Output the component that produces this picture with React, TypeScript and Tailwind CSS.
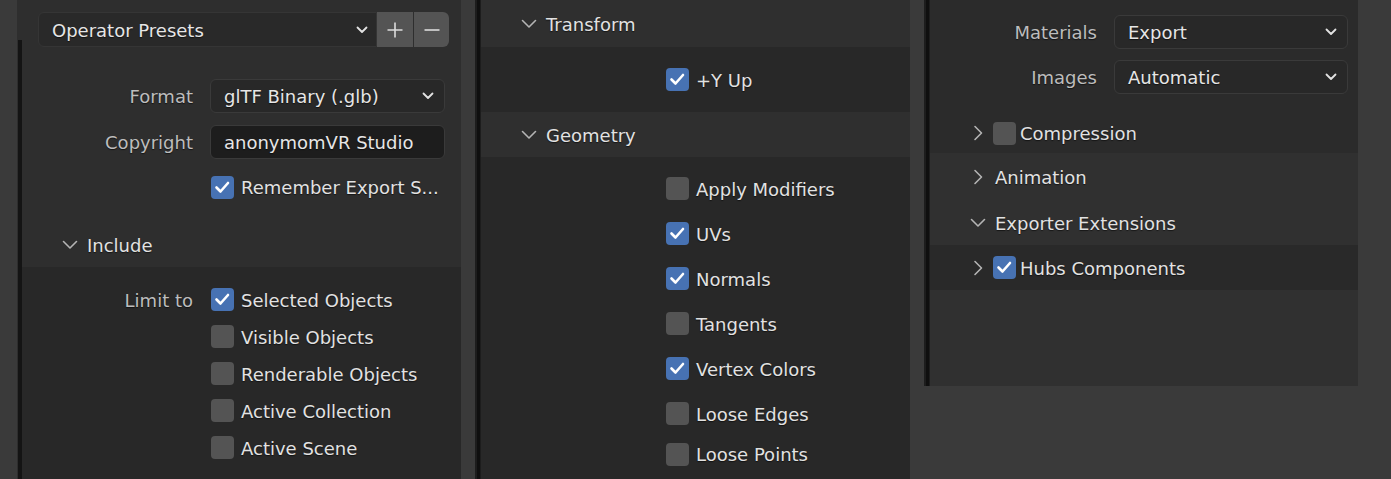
import React from "react";

const shadow = "[text-shadow:0_1px_1px_rgba(0,0,0,0.55)]";

function Check({ on }: { on: boolean }) {
  return (
    <span
      className={`flex h-[23px] w-[23px] shrink-0 items-center justify-center rounded-[4px] ${
        on ? "bg-[#4772b3]" : "bg-[#545454]"
      }`}
    >
      {on && (
        <svg width="23" height="23" viewBox="0 0 23 23" fill="none">
          <path d="M5.5 11.5 L9.5 15.5 L17 7" stroke="#ffffff" strokeWidth="2.6" strokeLinecap="round" strokeLinejoin="round" />
        </svg>
      )}
    </span>
  );
}

function Disclosure({ open }: { open: boolean }) {
  return (
    <span className="flex w-[16px] shrink-0 items-center justify-center">
      {open ? (
        <svg width="16" height="10" viewBox="0 0 16 10" fill="none">
          <path d="M1.5 1.5 L8 8 L14.5 1.5" stroke="#b4b4b4" strokeWidth="1.6" strokeLinecap="round" strokeLinejoin="round" />
        </svg>
      ) : (
        <svg width="10" height="16" viewBox="0 0 10 16" fill="none">
          <path d="M2 1.5 L8.5 8 L2 14.5" stroke="#b4b4b4" strokeWidth="1.6" strokeLinecap="round" strokeLinejoin="round" />
        </svg>
      )}
    </span>
  );
}

function Caret() {
  return (
    <svg width="12" height="8" viewBox="0 0 12 8" fill="none">
      <path d="M1.5 1.5 L6 6 L10.5 1.5" stroke="#e2e2e2" strokeWidth="1.8" strokeLinecap="round" strokeLinejoin="round" />
    </svg>
  );
}

function Select({ value, w }: { value: string; w: string }) {
  return (
    <div className={`flex h-[34px] ${w} items-center justify-between rounded-[6px] border border-[#3a3a3a] bg-[#282828] pl-[13px] pr-[10px] text-[#e6e6e6] ${shadow}`}>
      <span className="pt-[2px]">{value}</span>
      <Caret />
    </div>
  );
}

function Field({ label, labelW, children }: { label: string; labelW: string; children: React.ReactNode }) {
  return (
    <div className="flex h-[34px] items-center">
      <span className={`${labelW} pr-[17px] pt-[2px] text-right text-[#bdbdbd] ${shadow}`}>{label}</span>
      {children}
    </div>
  );
}

function CheckRow({ on, label, h, pl }: { on: boolean; label: string; h: string; pl: string }) {
  return (
    <div className={`flex ${h} items-center ${pl}`}>
      <Check on={on} />
      <span className={`ml-[7px] pt-[2px] text-[#e2e2e2] ${shadow}`}>{label}</span>
    </div>
  );
}

function Header({ open, label, h, check }: { open: boolean; label: string; h: string; check?: boolean }) {
  return (
    <div className={`flex ${h} items-center pl-[40px]`}>
      <Disclosure open={open} />
      {check !== undefined ? (
        <>
          <span className="ml-[7px]">
            <Check on={check} />
          </span>
          <span className={`ml-[4px] pt-[2px] text-[#e2e2e2] ${shadow}`}>{label}</span>
        </>
      ) : (
        <span className={`ml-[9px] pt-[2px] text-[#e2e2e2] ${shadow}`}>{label}</span>
      )}
    </div>
  );
}

function Strip() {
  return (
    <div className="flex w-[6px] shrink-0 bg-[#1d1d1d]">
      <div className="ml-[2px] w-[3px] bg-[#0f0f0f]" />
    </div>
  );
}

export default function App() {
  const limits = [
    { label: "Selected Objects", on: true },
    { label: "Visible Objects", on: false },
    { label: "Renderable Objects", on: false },
    { label: "Active Collection", on: false },
    { label: "Active Scene", on: false },
  ];
  const geometry = [
    { label: "Apply Modifiers", on: false },
    { label: "UVs", on: true },
    { label: "Normals", on: true },
    { label: "Tangents", on: false },
    { label: "Vertex Colors", on: true },
    { label: "Loose Edges", on: false },
  ];

  return (
    <div className="flex h-[479px] w-[1391px] gap-[14px] overflow-hidden bg-[#3a3a3a] pl-[17px] font-['DejaVu_Sans',sans-serif] text-[18px] leading-none">
      {/* left panel */}
      <div className="flex h-full w-[444px] shrink-0 bg-[#2e2e2e]">
        <div className="flex w-[5px] shrink-0 flex-col pt-[40px]">
          <div className="ml-[1px] w-[4px] flex-1 bg-[#141414]" />
        </div>
        <div className="flex flex-1 flex-col">
          <div className="flex h-[60px] items-start pl-[16px] pt-[12px]">
            <div className={`flex h-[35px] w-[339px] items-center justify-between rounded-l-[6px] border border-[#353535] bg-[#292929] pl-[13px] pr-[8px] text-[#e6e6e6] ${shadow}`}>
              <span className="pt-[2px]">Operator Presets</span>
              <Caret />
            </div>
            <div className="flex h-[35px] w-[36px] items-center justify-center bg-[#545454]">
              <svg width="16" height="16" viewBox="0 0 16 16">
                <path d="M8 0.5 V15.5 M0.5 8 H15.5" stroke="#dcdcdc" strokeWidth="1.6" />
              </svg>
            </div>
            <div className="ml-[1px] flex h-[35px] w-[35px] items-center justify-center rounded-r-[6px] bg-[#545454]">
              <svg width="16" height="4" viewBox="0 0 16 4">
                <path d="M0.5 2 H15.5" stroke="#dcdcdc" strokeWidth="1.6" />
              </svg>
            </div>
          </div>

          <div className="mt-[19px]">
            <Field label="Format" labelW="w-[188px]">
              <Select value="glTF Binary (.glb)" w="w-[235px]" />
            </Field>
          </div>
          <div className="mt-[12px]">
            <Field label="Copyright" labelW="w-[188px]">
              <div className={`flex h-[34px] w-[235px] items-center rounded-[6px] border border-[#3a3a3a] bg-[#1d1d1d] pl-[13px] pt-[2px] text-[#e6e6e6] ${shadow}`}>
                anonymomVR Studio
              </div>
            </Field>
          </div>
          <div className="mt-[11px]">
            <CheckRow on label="Remember Export S..." h="h-[34px]" pl="pl-[189px]" />
          </div>
          <div className="mt-[18px]">
            <Header open label="Include" h="h-[45px]" />
          </div>

          <div className="flex-1 bg-[#282828] pt-[14px]">
            {limits.map((l, i) => (
              <div key={l.label} className="flex h-[37px] items-center">
                <span className={`w-[189px] pr-[18px] pt-[2px] text-right text-[#bdbdbd] ${shadow}`}>{i === 0 ? "Limit to" : ""}</span>
                <Check on={l.on} />
                <span className={`ml-[7px] pt-[2px] text-[#e2e2e2] ${shadow}`}>{l.label}</span>
              </div>
            ))}
          </div>
        </div>
      </div>

      {/* middle panel */}
      <div className="flex h-full w-[435px] shrink-0">
        <Strip />
        <div className="flex flex-1 flex-col">
          <div className="bg-[#2f2f2f]">
            <Header open label="Transform" h="h-[47px]" />
          </div>
          <div className="flex h-[65px] items-center bg-[#282828] pl-[185px]">
            <Check on />
            <span className={`ml-[7px] pt-[2px] text-[#e2e2e2] ${shadow}`}>+Y Up</span>
          </div>
          <div className="bg-[#2f2f2f]">
            <Header open label="Geometry" h="h-[45px]" />
          </div>
          <div className="flex-1 bg-[#282828] pt-[9px]">
            {geometry.map((g) => (
              <CheckRow key={g.label} on={g.on} label={g.label} h="h-[45px]" pl="pl-[185px]" />
            ))}
            <CheckRow on={false} label="Loose Points" h="h-[36px]" pl="pl-[185px]" />
          </div>
        </div>
      </div>

      {/* right panel */}
      <div className="flex h-[386px] w-[434px] shrink-0">
        <Strip />
        <div className="flex flex-1 flex-col">
          <div className="flex h-[153px] flex-col bg-[#2b2b2b] pt-[15px]">
            <Field label="Materials" labelW="w-[184px]">
              <Select value="Export" w="w-[234px]" />
            </Field>
            <div className="mt-[11px]">
              <Field label="Images" labelW="w-[184px]">
                <Select value="Automatic" w="w-[234px]" />
              </Field>
            </div>
            <div className="mt-[19px]">
              <Header open={false} check={false} label="Compression" h="h-[40px]" />
            </div>
          </div>
          <div className="bg-[#303030]">
            <Header open={false} label="Animation" h="h-[48px]" />
            <Header open label="Exporter Extensions" h="h-[44px]" />
          </div>
          <div className="bg-[#292929]">
            <Header open={false} check label="Hubs Components" h="h-[45px]" />
          </div>
          <div className="flex-1 bg-[#303030]" />
        </div>
      </div>
    </div>
  );
}
